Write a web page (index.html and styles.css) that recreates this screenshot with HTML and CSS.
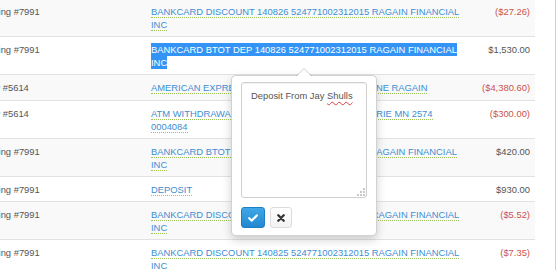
FILE: index.html
```html
<!DOCTYPE html>
<html lang="en">
<head>
    <meta charset="UTF-8">
    <meta name="viewport" content="width=device-width, initial-scale=1.0">
    <title>Transactions</title>
    <link rel="stylesheet" href="styles.css">
</head>
<body>
    <div class="page">
        <table class="ledger">
            <colgroup>
                <col class="col-account">
                <col class="col-desc">
                <col class="col-amount">
            </colgroup>
            <tbody>
                <tr>
                    <td>Checking #7991</td>
                    <td><a class="editable">BANKCARD DISCOUNT 140826 524771002312015 RAGAIN FINANCIAL INC</a></td>
                    <td class="amount neg">($27.26)</td>
                </tr>
                <tr>
                    <td>Checking #7991</td>
                    <td><a class="editable"><span class="selected">BANKCARD BTOT DEP 140826 524771002312015 RAGAIN FINANCIAL INC</span></a></td>
                    <td class="amount">$1,530.00</td>
                </tr>
                <tr>
                    <td>Money #5614</td>
                    <td><a class="editable">AMERICAN EXPRESS ACH PMT M824 012 CHRISTINE RAGAIN</a></td>
                    <td class="amount neg">($4,380.60)</td>
                </tr>
                <tr>
                    <td>Money #5614</td>
                    <td><a class="editable">ATM WITHDRAWAL 002574 0826 120 MAIN ST PRAIRIE MN 2574 0004084</a></td>
                    <td class="amount neg">($300.00)</td>
                </tr>
                <tr>
                    <td>Checking #7991</td>
                    <td><a class="editable">BANKCARD BTOT DEP 140822 524771002312015 RAGAIN FINANCIAL INC</a></td>
                    <td class="amount">$420.00</td>
                </tr>
                <tr>
                    <td>Checking #7991</td>
                    <td><a class="editable">DEPOSIT</a></td>
                    <td class="amount">$930.00</td>
                </tr>
                <tr>
                    <td>Checking #7991</td>
                    <td><a class="editable">BANKCARD DISCOUNT 140826 524771002312015 RAGAIN FINANCIAL INC</a></td>
                    <td class="amount neg">($5.52)</td>
                </tr>
                <tr>
                    <td>Checking #7991</td>
                    <td><a class="editable">BANKCARD DISCOUNT 140825 524771002312015 RAGAIN FINANCIAL INC</a></td>
                    <td class="amount neg">($7.35)</td>
                </tr>
            </tbody>
        </table>

        <!-- inline editor for the selected row -->
        <div class="popover">
            <div class="note">
                Deposit From Jay <span class="typo">Shulls</span>
                <svg class="grip" width="8" height="8" viewBox="0 0 8 8">
                    <rect x="6" y="0" width="2" height="2" fill="#c8c8c8"/>
                    <rect x="3" y="3" width="2" height="2" fill="#c8c8c8"/>
                    <rect x="6" y="3" width="2" height="2" fill="#c8c8c8"/>
                    <rect x="0" y="6" width="2" height="2" fill="#c8c8c8"/>
                    <rect x="3" y="6" width="2" height="2" fill="#c8c8c8"/>
                    <rect x="6" y="6" width="2" height="2" fill="#c8c8c8"/>
                </svg>
            </div>
            <div class="actions">
                <button class="btn btn-ok">
                    <svg width="10" height="8" viewBox="0 0 10 8"><path d="M1.2 4.2 L3.8 6.6 L8.8 1.4" fill="none" stroke="#fff" stroke-width="2.2" stroke-linecap="round" stroke-linejoin="round"/></svg>
                </button>
                <button class="btn btn-cancel">
                    <svg width="8" height="8" viewBox="0 0 8 8"><path d="M1.3 1.3 L6.7 6.7 M6.7 1.3 L1.3 6.7" fill="none" stroke="#333" stroke-width="2.3" stroke-linecap="round"/></svg>
                </button>
            </div>
        </div>
    </div>
</body>
</html>
```

FILE: styles.css
```css
body {
    margin: 0;
    background-color: #fff;
    font-family: 'Liberation Sans', Arial, sans-serif;
    color: #555;
}

.page {
    position: relative;
    width: 555px;
    height: 270px;
    border-right: 1px solid #cfcfcf;
    overflow: hidden;
}

.ledger {
    margin: -2px 0 0 -36px;
    width: 571px;
    border-collapse: collapse;
    table-layout: fixed;
    font-size: 9.4px;
}

.col-account {
    width: 179px;
}

.col-desc {
    width: 328px;
}

.col-amount {
    width: 64px;
}

.ledger td {
    padding: 6px 8px 5.2px;
    border-top: 1px solid #e2e2e2;
    line-height: 13px;
    vertical-align: top;
}

.ledger td:nth-child(2) {
    padding-right: 4px;
}

.ledger tr:nth-child(odd) td {
    background-color: #f9f9f9;
}

.ledger td.amount {
    text-align: right;
    padding-right: 5px;
    white-space: nowrap;
}

.ledger td.neg {
    color: #c9534f;
}

.editable {
    color: #3c8ed3;
    text-decoration: none;
    border-bottom: 1px dotted #9bc35a;
}

.selected {
    background-color: #3394f5;
    color: #fff;
    padding: 1px 0;
}

/* editor popover */
.popover {
    position: absolute;
    left: 231px;
    top: 75px;
    width: 126px;
    padding: 6px 9px 7px;
    background-color: #fff;
    border: 1px solid rgba(0, 0, 0, 0.18);
    border-radius: 5px;
    box-shadow: 0 4px 10px rgba(0, 0, 0, 0.18);
}

.popover::before,
.popover::after {
    content: '';
    position: absolute;
    left: 50%;
    width: 0;
    height: 0;
    border-style: solid;
    border-color: transparent;
}

.popover::before {
    top: -8px;
    margin-left: -8px;
    border-width: 0 8px 8px;
    border-bottom-color: rgba(0, 0, 0, 0.18);
}

.popover::after {
    top: -7px;
    margin-left: -7px;
    border-width: 0 7px 7px;
    border-bottom-color: #fff;
}

.note {
    position: relative;
    box-sizing: border-box;
    height: 116px;
    padding: 6px 9px;
    border: 1px solid #d0d0d0;
    border-radius: 3px;
    box-shadow: inset 0 1px 1px rgba(0, 0, 0, 0.06);
    font-size: 9.4px;
    line-height: 13px;
    color: #555;
}

.typo {
    text-decoration: underline wavy #e04040;
    text-decoration-thickness: 1px;
    text-underline-offset: 2px;
}

.grip {
    position: absolute;
    right: 1px;
    bottom: 1px;
}

.actions {
    display: flex;
    gap: 5px;
    margin-top: 9px;
}

.btn {
    display: flex;
    align-items: center;
    justify-content: center;
    box-sizing: border-box;
    height: 21px;
    padding: 0;
    border-radius: 3px;
    cursor: pointer;
}

.btn-ok {
    width: 24px;
    background: linear-gradient(#40a8e6, #2188d1);
    border: 1px solid #1d7fc3;
}

.btn-cancel {
    width: 22px;
    background: linear-gradient(#fff, #f3f3f3);
    border: 1px solid #dcdcdc;
}
```
